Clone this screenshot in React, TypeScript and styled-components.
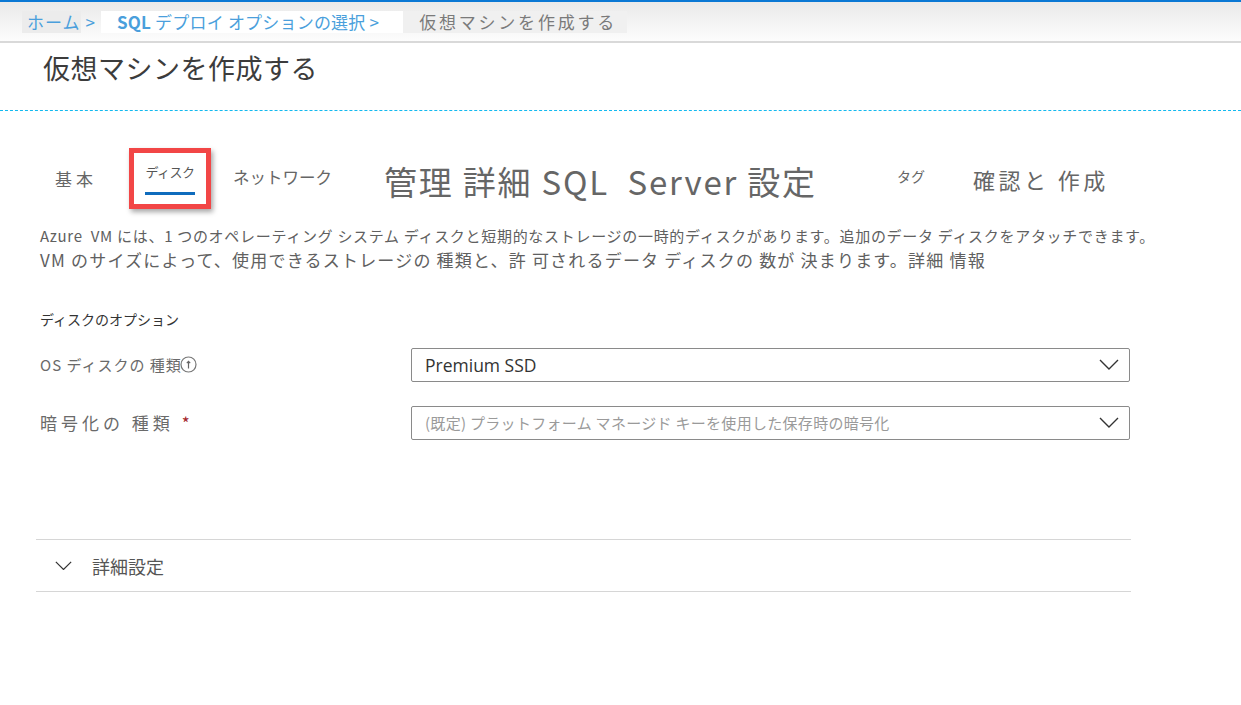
import React from "react";
import styled, { createGlobalStyle } from "styled-components";

const GlobalStyle = createGlobalStyle`
  html, body {
    margin: 0;
    padding: 0;
    background: #ffffff;
    font-family: "Noto Sans CJK JP", "Noto Sans", "Liberation Sans", sans-serif;
  }
`;

const Page = styled.div`
  width: 1241px;
  height: 705px;
  overflow: hidden;
  background: #fff;
`;

const TopBar = styled.div`
  height: 39px;
  border-top: 2px solid #0a78d4;
  border-bottom: 2px solid #d9d9d9;
  background: linear-gradient(#e9e9e9, #fdfdfd);
  display: flex;
  align-items: center;
  padding-left: 22px;
`;

const Crumb = styled.span<{ $bg?: string; $color?: string; $pad?: string; $spacing?: number }>`
  display: inline-flex;
  align-items: center;
  height: 22px;
  padding: ${(p) => p.$pad || "0 4px"};
  background: ${(p) => p.$bg || "transparent"};
  color: ${(p) => p.$color || "#4a9fdc"};
  font-size: 17px;
  letter-spacing: ${(p) => p.$spacing || 0}px;
  line-height: 22px;
  white-space: pre;
`;

const TitleBlock = styled.div`
  height: 67px;
  border-bottom: 1px dashed #14b9ef;
  padding-left: 43px;
  display: flex;
  align-items: flex-start;
`;

const Title = styled.h1`
  margin: 5px 0 0;
  font-size: 27px;
  font-weight: 400;
  color: #3c3c3c;
  letter-spacing: 0.5px;
`;

const Tabs = styled.div`
  margin-top: 37px;
  height: 61px;
  display: flex;
  align-items: center;
  padding-left: 55px;
`;

const Tab = styled.div<{ $size: number; $left: number; $dy?: number; $spacing?: number }>`
  margin-left: ${(p) => p.$left}px;
  font-size: ${(p) => p.$size}px;
  letter-spacing: ${(p) => p.$spacing || 0}px;
  color: #666;
  white-space: pre;
  position: relative;
  top: ${(p) => p.$dy || 0}px;
`;

const ActiveTab = styled.div`
  margin-left: 32px;
  width: 72px;
  height: 51px;
  border: 5px solid #f24646;
  box-shadow: 2px 3px 5px rgba(0, 0, 0, 0.35);
  display: flex;
  flex-direction: column;
  align-items: center;
  justify-content: flex-start;
  color: #555;
  font-size: 13px;
`;

const ActiveLabel = styled.span`
  margin-top: 9px;
  letter-spacing: -0.5px;
`;

const ActiveLine = styled.span`
  margin-top: 11px;
  width: 50px;
  height: 3px;
  background: #0f6cbd;
`;

const Content = styled.div`
  padding-left: 40px;
  padding-right: 110px;
`;

const Desc = styled.p<{ $size: number; $spacing: number }>`
  margin: 0;
  font-size: ${(p) => p.$size}px;
  letter-spacing: ${(p) => p.$spacing}px;
  line-height: 23px;
  color: #606060;
  white-space: nowrap;
`;

const SectionLabel = styled.div`
  margin-top: 38px;
  font-size: 14px;
  color: #333;
`;

const FormRow = styled.div<{ $top: number }>`
  margin-top: ${(p) => p.$top}px;
  display: flex;
  align-items: center;
  height: 33px;
`;

const Label = styled.div<{ $size: number; $spacing?: number }>`
  width: 371px;
  font-size: ${(p) => p.$size}px;
  letter-spacing: ${(p) => p.$spacing || 0}px;
  color: #6a6a6a;
  display: flex;
  align-items: center;
`;

const Star = styled.span`
  color: #a4262c;
  margin-left: 8px;
`;

const Select = styled.div<{ $placeholder?: boolean }>`
  width: 719px;
  height: 34px;
  box-sizing: border-box;
  border: 1px solid #8a8a8a;
  border-radius: 2px;
  display: flex;
  align-items: center;
  justify-content: space-between;
  padding: 0 10px 0 13px;
  font-size: ${(p) => (p.$placeholder ? "15px" : "17.5px")};
  letter-spacing: ${(p) => (p.$placeholder ? "0.3px" : "0")};
  color: ${(p) => (p.$placeholder ? "#9a9a9a" : "#333")};
  font-family: ${(p) =>
    p.$placeholder ? `"Noto Sans CJK JP", sans-serif` : `"Open Sans", "Noto Sans", sans-serif`};
`;

const Collapse = styled.div`
  margin: 100px 110px 0 36px;
  height: 51px;
  border-top: 1px solid #d6d6d6;
  border-bottom: 1px solid #d6d6d6;
  display: flex;
  align-items: center;
  padding-left: 19px;
  font-size: 18px;
  color: #555;
`;

const CollapseText = styled.span`
  margin-left: 20px;
`;

const Chevron = ({ size = 20 }: { size?: number }) => (
  <svg width={size} height={size * 0.55} viewBox="0 0 20 11" fill="none">
    <path d="M1 1 L10 10 L19 1" stroke="#333" strokeWidth="1.4" />
  </svg>
);

const InfoIcon = () => (
  <svg width="17" height="17" viewBox="0 0 17 17" fill="none" style={{ marginLeft: -2 }}>
    <circle cx="8.5" cy="8.5" r="7.5" stroke="#777" strokeWidth="1.2" />
    <path d="M8.5 5.5 V12.5 M6.8 7.2 L8.5 5.3 L10.2 7.2" stroke="#666" strokeWidth="1.2" />
  </svg>
);

export default function App() {
  return (
    <Page>
      <GlobalStyle />
      <TopBar>
        <Crumb $bg="#ececec" $pad="0 0 0 5px" $spacing={1}>ホーム</Crumb>
        <Crumb $pad="0 6px 0 5px">&gt;</Crumb>
        <Crumb $bg="#ffffff" $pad="0 8px 0 16px" $spacing={0.2}>
          <b style={{ fontWeight: 600 }}>SQL</b> デプロイ オプションの選択 &gt;
        </Crumb>
        <Crumb $bg="#ffffff" $pad="0 8px" />
        <Crumb $bg="#f0f0f0" $color="#7a7a7a" $pad="0 10px 0 16px" $spacing={2.8}>
          仮想マシンを作成する
        </Crumb>
      </TopBar>
      <TitleBlock>
        <Title>仮想マシンを作成する</Title>
      </TitleBlock>
      <Tabs>
        <Tab $size={17} $left={0} $spacing={4} $dy={0}>基本</Tab>
        <ActiveTab>
          <ActiveLabel>ディスク</ActiveLabel>
          <ActiveLine />
        </ActiveTab>
        <Tab $size={16.5} $left={22} $dy={-2}>ネットワーク</Tab>
        <Tab $size={33} $left={52} $dy={2} $spacing={1.8}>管理 詳細 SQL  Server 設定</Tab>
        <Tab $size={14} $left={80} $dy={-3}>タグ</Tab>
        <Tab $size={22} $left={48} $dy={0} $spacing={3.5}>確認と 作成</Tab>
      </Tabs>
      <Content>
        <Desc $size={15} $spacing={0.7} style={{ marginTop: 15 }}>
          Azure&nbsp; VM には、1 つのオペレーティング システム ディスクと短期的なストレージの一時的ディスクがあります。追加のデータ ディスクをアタッチできます。
        </Desc>
        <Desc $size={17} $spacing={1.2} style={{ marginTop: 1 }}>
          VM のサイズによって、使用できるストレージの 種類と、許 可されるデータ ディスクの 数が 決まります。詳細 情報
        </Desc>
        <SectionLabel>ディスクのオプション</SectionLabel>
        <FormRow $top={19}>
          <Label $size={15} $spacing={1}>
            OS ディスクの 種類
            <InfoIcon />
          </Label>
          <Select>
            <span>Premium SSD</span>
            <Chevron />
          </Select>
        </FormRow>
        <FormRow $top={25}>
          <Label $size={17} $spacing={4}>
            暗号化の 種類<Star>*</Star>
          </Label>
          <Select $placeholder>
            <span>(既定) プラットフォーム マネージド キーを使用した保存時の暗号化</span>
            <Chevron />
          </Select>
        </FormRow>
      </Content>
      <Collapse>
        <Chevron size={17} />
        <CollapseText>詳細設定</CollapseText>
      </Collapse>
    </Page>
  );
}
